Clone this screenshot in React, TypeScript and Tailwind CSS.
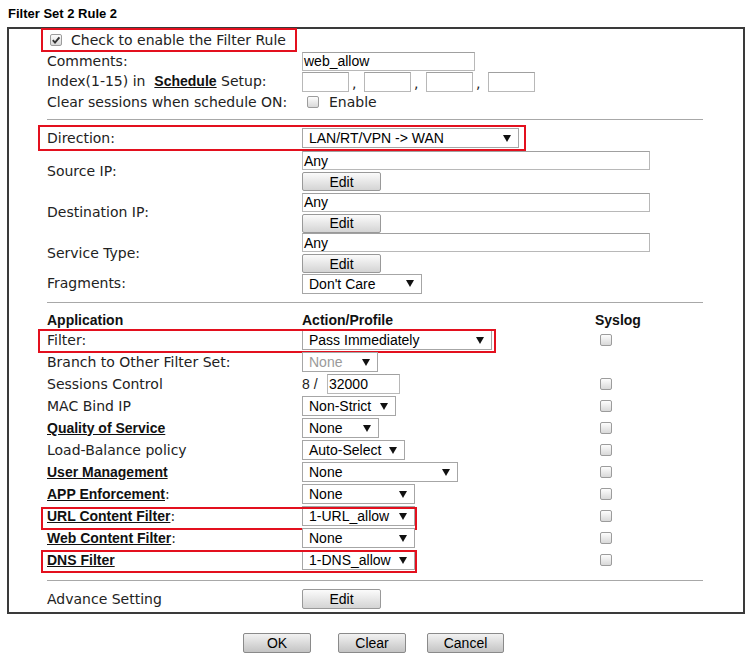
import React from "react";

const VERDANA = "font-['DejaVu_Sans',Verdana,sans-serif] text-[14px] text-[#222]";
const ARIAL = "font-['Liberation_Sans',Arial,sans-serif]";

const Check: React.FC<{ on?: boolean }> = ({ on }) => (
  <span className="inline-flex w-[12px] h-[12px] shrink-0 items-center justify-center rounded-[2px] border border-[#9c9c9c] bg-linear-to-b from-[#fdfdfd] to-[#d9d9d9]">
    {on && (
      <svg width="10" height="10" viewBox="0 0 10 10">
        <path d="M1.8 5.2 L4 7.6 L8.4 2.4" fill="none" stroke="#333" strokeWidth="1.9" />
      </svg>
    )}
  </span>
);

const Select: React.FC<{ w: string; value: string; dim?: boolean }> = ({ w, value, dim }) => (
  <div
    className={`${w} h-[20px] flex items-center justify-between border border-[#a6a6a6] bg-white pl-[6px] pr-[7px] ${ARIAL} text-[14px] ${
      dim ? "text-[#9a9a9a]" : "text-black"
    }`}
  >
    <span className="leading-none">{value}</span>
    <svg width="8" height="7" viewBox="0 0 8 7">
      <path d="M0 0 H8 L4 7 Z" fill="#111" />
    </svg>
  </div>
);

const Input: React.FC<{ w: string; value?: string; h?: string }> = ({ w, value, h = "h-[19px]" }) => (
  <div className={`${w} ${h} flex items-center border border-[#b8b8b8] border-t-[#a0a0a0] bg-white pl-[1px] ${ARIAL} text-[14px] text-black leading-none`}>
    {value}
  </div>
);

const Btn: React.FC<{ w: string; label: string; h?: string; dark?: boolean }> = ({ w, label, h = "h-[20px]", dark }) => (
  <button
    className={`${w} ${h} flex items-center justify-center rounded-[2px] border bg-linear-to-b ${
      dark ? "border-[#8a8a8a] from-[#f2f2f2] to-[#c4c4c4]" : "border-[#999] from-[#fbfbfb] to-[#d4d4d4]"
    } ${ARIAL} text-[14px] text-black leading-none`}
  >
    {label}
  </button>
);

const Mark: React.FC<{ cls: string }> = ({ cls }) => (
  <span className={`pointer-events-none absolute border-2 border-[#e3101e] ${cls}`} />
);

const Row: React.FC<{
  h: string;
  label: React.ReactNode;
  children?: React.ReactNode;
  syslog?: boolean;
  mark?: string;
}> = ({ h, label, children, syslog, mark }) => (
  <div className={`relative flex items-center ${h}`}>
    <div className={`w-[293px] shrink-0 pl-[38px] ${VERDANA}`}>{label}</div>
    <div className="w-[293px] shrink-0 flex items-center">{children}</div>
    {syslog && (
      <div className="pl-[5px] flex items-center">
        <Check />
      </div>
    )}
    {mark && <Mark cls={mark} />}
  </div>
);

const Rule: React.FC<{ h: string }> = ({ h }) => (
  <div className={`flex items-center pl-[38px] ${h}`}>
    <div className="w-[656px] h-px bg-[#a8a8a8]" />
  </div>
);

const B: React.FC<{ children: React.ReactNode }> = ({ children }) => (
  <span className={`${ARIAL} font-bold underline text-[14px] text-[#111]`}>{children}</span>
);

const App: React.FC = () => {
  const apps: { label: React.ReactNode; ctl: React.ReactNode; syslog: boolean; mark?: string }[] = [
    {
      label: "Filter:",
      ctl: <Select w="w-[190px]" value="Pass Immediately" />,
      syslog: true,
      mark: "left-[29px] top-0 w-[458px] h-[24px]",
    },
    { label: "Branch to Other Filter Set:", ctl: <Select w="w-[76px]" value="None" dim />, syslog: false },
    {
      label: "Sessions Control",
      ctl: (
        <span className="flex items-center">
          <span className={`${ARIAL} text-[14px] text-[#222] w-[25px]`}>8 /</span>
          <Input w="w-[73px]" h="h-[20px]" value="32000" />
        </span>
      ),
      syslog: true,
    },
    { label: "MAC Bind IP", ctl: <Select w="w-[94px]" value="Non-Strict" />, syslog: true },
    { label: <B>Quality of Service</B>, ctl: <Select w="w-[77px]" value="None" />, syslog: true },
    { label: "Load-Balance policy", ctl: <Select w="w-[103px]" value="Auto-Select" />, syslog: true },
    { label: <B>User Management</B>, ctl: <Select w="w-[156px]" value="None" />, syslog: true },
    {
      label: (
        <>
          <B>APP Enforcement</B>:
        </>
      ),
      ctl: <Select w="w-[113px]" value="None" />,
      syslog: true,
    },
    {
      label: (
        <>
          <B>URL Content Filter</B>:
        </>
      ),
      ctl: <Select w="w-[113px]" value="1-URL_allow" />,
      syslog: true,
      mark: "left-[32px] top-[2px] w-[376px] h-[23px]",
    },
    {
      label: (
        <>
          <B>Web Content Filter</B>:
        </>
      ),
      ctl: <Select w="w-[113px]" value="None" />,
      syslog: true,
    },
    {
      label: <B>DNS Filter</B>,
      ctl: <Select w="w-[113px]" value="1-DNS_allow" />,
      syslog: true,
      mark: "left-[32px] top-[1px] w-[376px] h-[23px]",
    },
  ];

  return (
    <div className="w-[750px] h-[660px] bg-white">
      <div className={`h-[27px] pl-[8px] pt-[7px] ${ARIAL} font-bold text-[13px] text-black leading-none`}>
        Filter Set 2 Rule 2
      </div>

      <div className="ml-[7px] w-[738px] border-2 border-[#3a3a3a]">
        <div className="relative flex items-center h-[22px] pl-[41px]">
          <span className={`flex items-center gap-[9px] ${VERDANA}`}>
            <Check on />
            Check to enable the Filter Rule
          </span>
          <Mark cls="left-[32px] top-[-1px] w-[256px] h-[24px]" />
        </div>

        <Row h="h-[20px]" label="Comments:">
          <Input w="w-[173px]" value="web_allow" />
        </Row>

        <Row
          h="h-[21px]"
          label={
            <>
              Index(1-15) in&nbsp; <B>Schedule</B> Setup:
            </>
          }
        >
          {[0, 1, 2, 3].map((i) => (
            <span key={i} className="flex items-end">
              <Input w="w-[47px]" h="h-[20px]" />
              {i < 3 && <span className={`w-[15px] pl-[3px] pb-[2px] ${VERDANA} leading-none`}>,</span>}
            </span>
          ))}
        </Row>

        <Row h="h-[20px]" label="Clear sessions when schedule ON:">
          <span className={`flex items-center gap-[10px] pl-[5px] ${VERDANA}`}>
            <Check />
            Enable
          </span>
        </Row>

        <Rule h="h-[14px]" />

        <Row h="h-[24px]" label="Direction:" mark="left-[29px] top-[-1px] w-[488px] h-[26px]">
          <Select w="w-[217px]" value="LAN/RT/VPN -> WAN" />
        </Row>

        {[
          { label: "Source IP:", h: "h-[42px]" },
          { label: "Destination IP:", h: "h-[41px]" },
          { label: "Service Type:", h: "h-[40px]" },
        ].map((r) => (
          <Row key={r.label} h={r.h} label={r.label}>
            <div className="flex flex-col gap-[2px]">
              <Input w="w-[348px]" value="Any" />
              <Btn w="w-[79px]" h="h-[19px]" label="Edit" />
            </div>
          </Row>
        ))}

        <Row h="h-[21px]" label="Fragments:">
          <Select w="w-[120px]" value="Don't Care" />
        </Row>

        <Rule h="h-[17px]" />

        <div className={`flex items-center h-[18px] ${ARIAL} font-bold text-[14px] text-[#111]`}>
          <span className="w-[293px] pl-[38px]">Application</span>
          <span className="w-[293px]">Action/Profile</span>
          <span>Syslog</span>
        </div>

        {apps.map((a, i) => (
          <Row key={i} h="h-[22px]" label={a.label} syslog={a.syslog} mark={a.mark}>
            {a.ctl}
          </Row>
        ))}

        <Rule h="h-[18px]" />

        <div className="flex items-start h-[23px]">
          <div className={`w-[293px] pl-[38px] h-[20px] flex items-center ${VERDANA}`}>Advance Setting</div>
          <Btn w="w-[79px]" label="Edit" />
        </div>
      </div>

      <div className="flex mt-[19px] pl-[243px]">
        <Btn w="w-[68px]" label="OK" dark />
        <div className="ml-[27px]">
          <Btn w="w-[68px]" label="Clear" dark />
        </div>
        <div className="ml-[21px]">
          <Btn w="w-[77px]" label="Cancel" dark />
        </div>
      </div>
    </div>
  );
};

export default App;
